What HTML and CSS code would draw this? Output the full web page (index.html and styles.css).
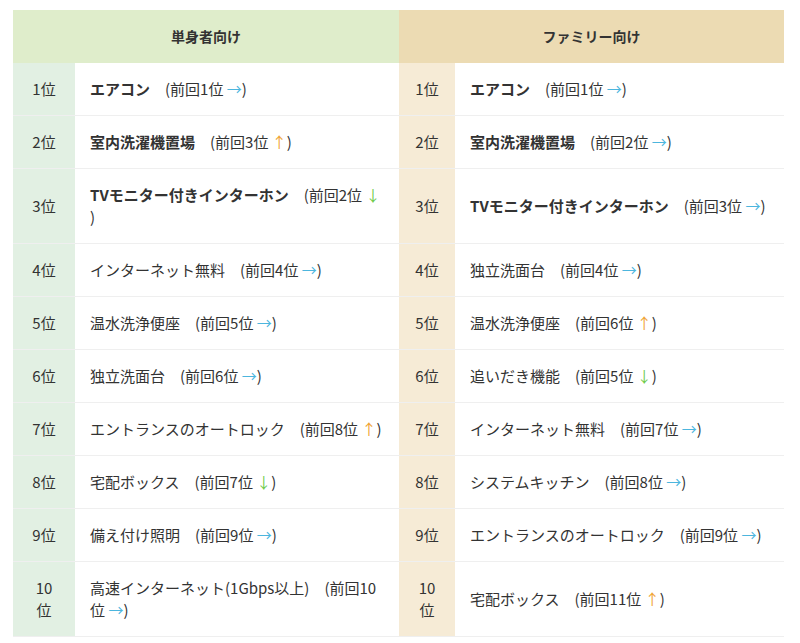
FILE: index.html
```html
<!DOCTYPE html>
<html lang="ja">
<head>
<meta charset="utf-8">
<title>人気設備ランキング</title>
<link rel="stylesheet" href="styles.css">
</head>
<body>
<div class="wrap">
<table class="rank">
  <colgroup>
    <col class="c-rank-l">
    <col class="c-item-l">
    <col class="c-rank-r">
    <col class="c-item-r">
  </colgroup>
  <thead>
    <tr>
      <th colspan="2" class="h-single">単身者向け</th>
      <th colspan="2" class="h-family">ファミリー向け</th>
    </tr>
  </thead>
  <tbody>
    <tr>
      <td class="r-single">1位</td>
      <td class="item"><strong>エアコン</strong>　(前回1位 <span class="ar same">→</span>)</td>
      <td class="r-family">1位</td>
      <td class="item"><strong>エアコン</strong>　(前回1位 <span class="ar same">→</span>)</td>
    </tr>
    <tr>
      <td class="r-single">2位</td>
      <td class="item"><strong>室内洗濯機置場</strong>　(前回3位 <span class="ar up">↑</span>)</td>
      <td class="r-family">2位</td>
      <td class="item"><strong>室内洗濯機置場</strong>　(前回2位 <span class="ar same">→</span>)</td>
    </tr>
    <tr>
      <td class="r-single">3位</td>
      <td class="item"><strong>TVモニター付きインターホン</strong>　(前回2位 <span class="ar down">↓</span>)</td>
      <td class="r-family">3位</td>
      <td class="item"><strong>TVモニター付きインターホン</strong>　(前回3位 <span class="ar same">→</span>)</td>
    </tr>
    <tr>
      <td class="r-single">4位</td>
      <td class="item">インターネット無料　(前回4位 <span class="ar same">→</span>)</td>
      <td class="r-family">4位</td>
      <td class="item">独立洗面台　(前回4位 <span class="ar same">→</span>)</td>
    </tr>
    <tr>
      <td class="r-single">5位</td>
      <td class="item">温水洗浄便座　(前回5位 <span class="ar same">→</span>)</td>
      <td class="r-family">5位</td>
      <td class="item">温水洗浄便座　(前回6位 <span class="ar up">↑</span>)</td>
    </tr>
    <tr>
      <td class="r-single">6位</td>
      <td class="item">独立洗面台　(前回6位 <span class="ar same">→</span>)</td>
      <td class="r-family">6位</td>
      <td class="item">追いだき機能　(前回5位 <span class="ar down">↓</span>)</td>
    </tr>
    <tr>
      <td class="r-single">7位</td>
      <td class="item">エントランスのオートロック　(前回8位 <span class="ar up">↑</span>)</td>
      <td class="r-family">7位</td>
      <td class="item">インターネット無料　(前回7位 <span class="ar same">→</span>)</td>
    </tr>
    <tr>
      <td class="r-single">8位</td>
      <td class="item">宅配ボックス　(前回7位 <span class="ar down">↓</span>)</td>
      <td class="r-family">8位</td>
      <td class="item">システムキッチン　(前回8位 <span class="ar same">→</span>)</td>
    </tr>
    <tr>
      <td class="r-single">9位</td>
      <td class="item">備え付け照明　(前回9位 <span class="ar same">→</span>)</td>
      <td class="r-family">9位</td>
      <td class="item">エントランスのオートロック　(前回9位 <span class="ar same">→</span>)</td>
    </tr>
    <tr>
      <td class="r-single">10位</td>
      <td class="item">高速インターネット(1Gbps以上)　(前回10位 <span class="ar same">→</span>)</td>
      <td class="r-family">10位</td>
      <td class="item">宅配ボックス　(前回11位 <span class="ar up">↑</span>)</td>
    </tr>
  </tbody>
</table>
</div>
</body>
</html>
```

FILE: styles.css
```css
html, body {
  margin: 0;
  padding: 0;
  background: #ffffff;
}

body {
  font-family: "Noto Sans CJK JP", "Noto Sans", "Liberation Sans", sans-serif;
  font-size: 15px;
  color: #333333;
}

.wrap {
  padding: 10px 0 0 13px;
}

.rank {
  width: 771px;
  border-collapse: collapse;
  table-layout: fixed;
}

.c-rank-l { width: 62px; }
.c-item-l { width: 324px; }
.c-rank-r { width: 56px; }
.c-item-r { width: 329px; }

.rank th {
  padding: 15px 15px 16px;
  line-height: 22px;
  font-size: 14px;
  font-weight: bold;
  text-align: center;
  color: #333333;
}

.h-single { background: #dfedcb; }
.h-family { background: #ecdbb3; }

.rank td {
  padding: 15px;
  line-height: 22px;
  border-bottom: 1px solid #efefef;
  vertical-align: middle;
}

.rank td.r-single,
.rank td.r-family {
  text-align: center;
}

.rank td.r-single {
  padding-left: 17px;
  padding-right: 17px;
}

.rank td.r-family {
  padding-left: 14px;
  padding-right: 14px;
}

.r-single { background: #e2f0e3; }
.r-family { background: #f6ebd6; }

.item strong {
  font-weight: bold;
}

.ar {
  display: inline-block;
}

.same { color: #4cb6de; }
.up { color: #f0a332; }
.down { color: #6ecb4a; }
```
